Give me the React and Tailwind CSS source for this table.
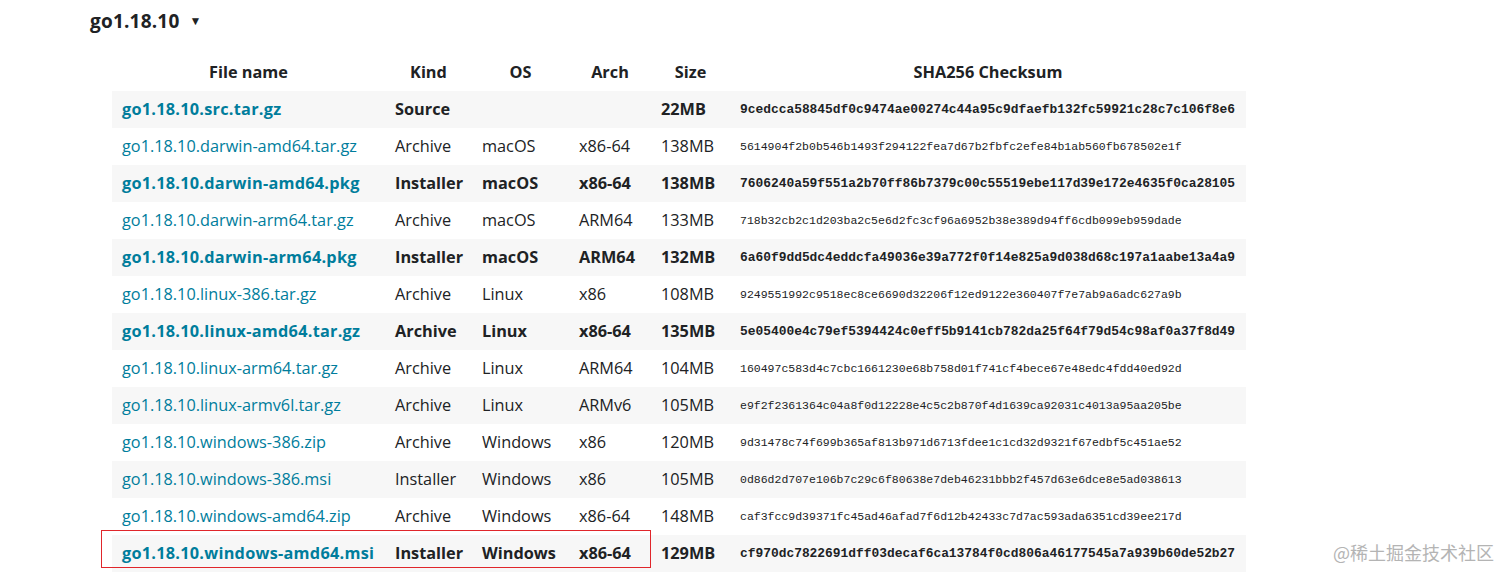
import React from "react";

const rows = [
  ["go1.18.10.src.tar.gz", "Source", "", "", "22MB", "9cedcca58845df0c9474ae00274c44a95c9dfaefb132fc59921c28c7c106f8e6", true],
  ["go1.18.10.darwin-amd64.tar.gz", "Archive", "macOS", "x86-64", "138MB", "5614904f2b0b546b1493f294122fea7d67b2fbfc2efe84b1ab560fb678502e1f", false],
  ["go1.18.10.darwin-amd64.pkg", "Installer", "macOS", "x86-64", "138MB", "7606240a59f551a2b70ff86b7379c00c55519ebe117d39e172e4635f0ca28105", true],
  ["go1.18.10.darwin-arm64.tar.gz", "Archive", "macOS", "ARM64", "133MB", "718b32cb2c1d203ba2c5e6d2fc3cf96a6952b38e389d94ff6cdb099eb959dade", false],
  ["go1.18.10.darwin-arm64.pkg", "Installer", "macOS", "ARM64", "132MB", "6a60f9dd5dc4eddcfa49036e39a772f0f14e825a9d038d68c197a1aabe13a4a9", true],
  ["go1.18.10.linux-386.tar.gz", "Archive", "Linux", "x86", "108MB", "9249551992c9518ec8ce6690d32206f12ed9122e360407f7e7ab9a6adc627a9b", false],
  ["go1.18.10.linux-amd64.tar.gz", "Archive", "Linux", "x86-64", "135MB", "5e05400e4c79ef5394424c0eff5b9141cb782da25f64f79d54c98af0a37f8d49", true],
  ["go1.18.10.linux-arm64.tar.gz", "Archive", "Linux", "ARM64", "104MB", "160497c583d4c7cbc1661230e68b758d01f741cf4bece67e48edc4fdd40ed92d", false],
  ["go1.18.10.linux-armv6l.tar.gz", "Archive", "Linux", "ARMv6", "105MB", "e9f2f2361364c04a8f0d12228e4c5c2b870f4d1639ca92031c4013a95aa205be", false],
  ["go1.18.10.windows-386.zip", "Archive", "Windows", "x86", "120MB", "9d31478c74f699b365af813b971d6713fdee1c1cd32d9321f67edbf5c451ae52", false],
  ["go1.18.10.windows-386.msi", "Installer", "Windows", "x86", "105MB", "0d86d2d707e106b7c29c6f80638e7deb46231bbb2f457d63e6dce8e5ad038613", false],
  ["go1.18.10.windows-amd64.zip", "Archive", "Windows", "x86-64", "148MB", "caf3fcc9d39371fc45ad46afad7f6d12b42433c7d7ac593ada6351cd39ee217d", false],
  ["go1.18.10.windows-amd64.msi", "Installer", "Windows", "x86-64", "129MB", "cf970dc7822691dff03decaf6ca13784f0cd806a46177545a7a939b60de52b27", true],
];

export default function App() {
  return (
    <div
      className="relative w-[1512px] h-[582px] overflow-hidden bg-white text-[#202224]"
      style={{ fontFamily: '"Open Sans", "Noto Sans", sans-serif' }}
    >
      <div className="pl-[90px] h-[42px] flex items-center">
        <span className="text-[19px] font-bold leading-none tracking-[0.2px]">go1.18.10</span>
        <span className="ml-[10px] text-[12px] leading-none">▼</span>
      </div>
      <div className="pl-[112px] pt-[12px]">
        <table className="table-fixed border-collapse w-[1134px] text-[16.3px]">
          <colgroup>
            <col className="w-[273px]" />
            <col className="w-[87px]" />
            <col className="w-[97px]" />
            <col className="w-[82px]" />
            <col className="w-[79px]" />
            <col className="w-[516px]" />
          </colgroup>
          <thead>
            <tr className="h-[37px]">
              {["File name", "Kind", "OS", "Arch", "Size", "SHA256 Checksum"].map((h) => (
                <th key={h} className="text-center font-bold px-[10px] py-0">
                  {h}
                </th>
              ))}
            </tr>
          </thead>
          <tbody>
            {rows.map((r, i) => (
              <tr key={r[0]} className={`h-[37px] ${i % 2 === 0 ? "bg-[#f7f7f7]" : "bg-white"} ${r[6] ? "font-bold" : ""}`}>
                <td className={`px-[10px] text-[#007d9c] whitespace-nowrap ${r[6] ? "tracking-[0.25px]" : ""}`}>{r[0]}</td>
                <td className="px-[10px] whitespace-nowrap">{r[1]}</td>
                <td className="px-[10px] whitespace-nowrap">{r[2]}</td>
                <td className="px-[10px] whitespace-nowrap">{r[3]}</td>
                <td className="px-[10px] whitespace-nowrap">{r[4]}</td>
                <td
                  className={`px-[10px] whitespace-nowrap ${r[6] ? "text-[12.9px]" : "text-[11.5px] font-normal"}`}
                  style={{ fontFamily: '"Liberation Mono", monospace' }}
                >
                  {r[5]}
                </td>
              </tr>
            ))}
          </tbody>
        </table>
      </div>
      <div className="absolute left-[101px] top-[530px] w-[550px] h-[38px] border-[1.5px] border-[#e0262b]"></div>
      <div
        className="absolute left-[1333px] top-[543px] text-[18px] text-[#b4b4b4] leading-none"
        style={{ fontFamily: '"Noto Sans CJK SC", sans-serif' }}
      >
        @稀土掘金技术社区
      </div>
    </div>
  );
}
